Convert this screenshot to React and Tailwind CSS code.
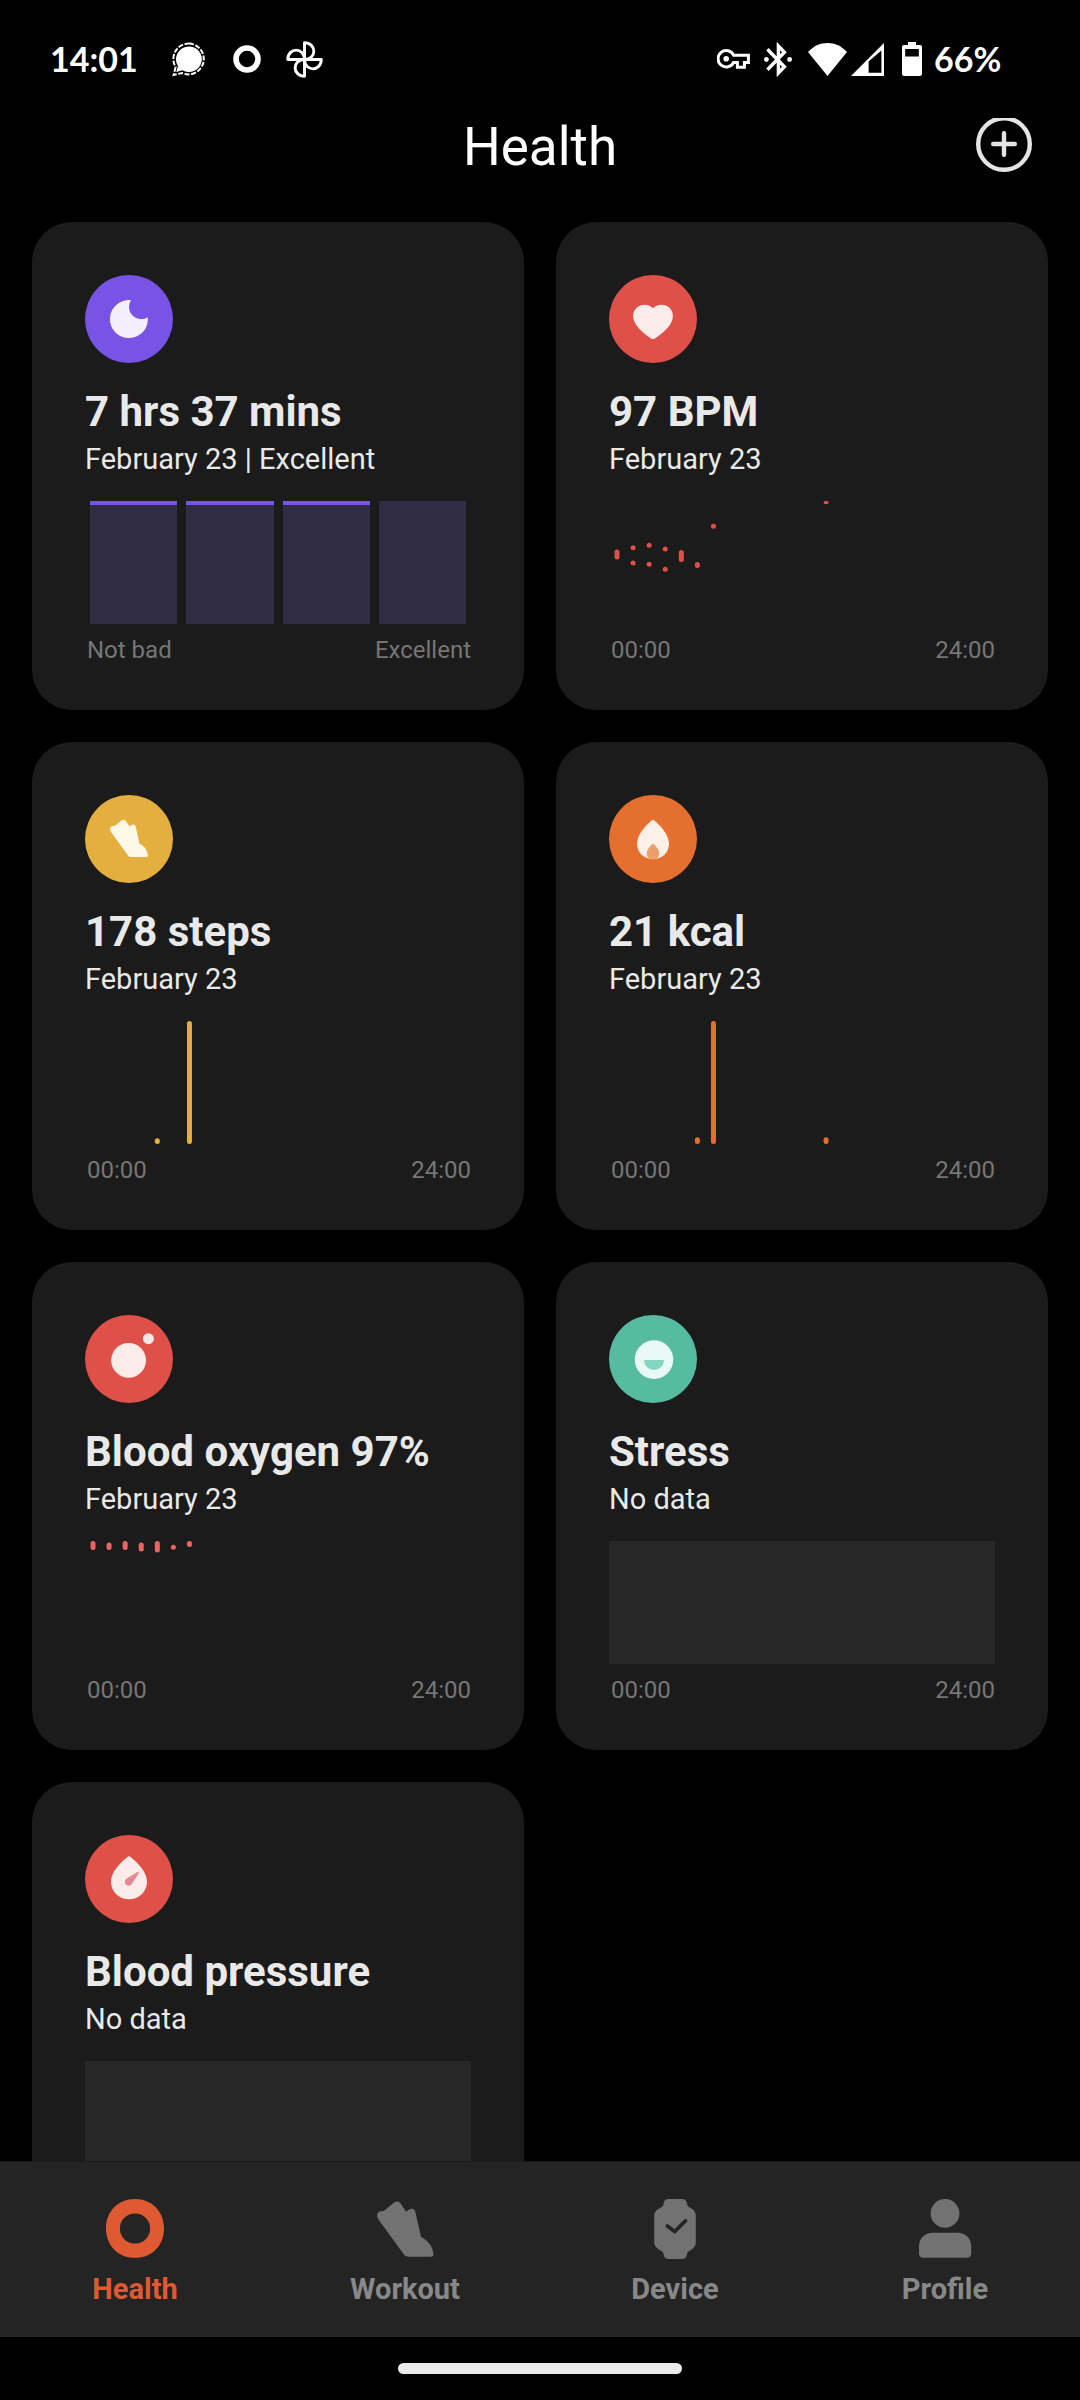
import { useState } from "react";

const SHOE =
  "M23 1.4L29.3 10.7L32.5 8.2C35 6.6 37.6 7.8 38.3 10.7L44 36.5L48.5 39.7C53.2 43.3 55.8 48.5 56.5 54.2C56.6 56.2 55.8 57.2 54 57.2H31.7C29.5 57.2 27.8 56.2 26.6 54.4L1.8 19.3C0.3 17 -0.3 14.5 0.4 12.6C1.2 10.6 3.4 9.9 5.2 9.9C6.6 9.9 7.4 9.4 8.4 8.6L16.8 1.4C18.8 -0.3 21.5 -0.5 23 1.4Z";

/* ── Card icons, drawn on the 88px disc ───────────────────────────── */
function Disc({ color, children }) {
  return (
    <svg viewBox="0 0 88 88" className="size-22" aria-hidden="true">
      <circle cx="44" cy="44" r="44" fill={color} />
      {children}
    </svg>
  );
}

const MoonIcon = () => (
  <Disc color="#7854e6">
    <path fill="#f4effd" d="M46 25.2A19 19 0 1 0 62.8 42.2A12.2 12.2 0 0 1 46 25.2Z" />
  </Disc>
);

const HeartIcon = () => (
  <Disc color="#df5049">
    <path
      fill="#fcedeb"
      d="M44 33.2C47 29.8 51.5 28.9 56 30.2C62.5 32.2 65.5 39 63 45.8C60.5 52.5 52.5 59.2 46 63.4Q44 64.6 42 63.4C35.5 59.2 27.5 52.5 25 45.8C22.5 39 25.5 32.2 32 30.2C36.5 28.9 41 29.8 44 33.2Z"
    />
  </Disc>
);

const StepsIcon = () => (
  <Disc color="#e5af3f">
    <path fill="#fef8e8" transform="translate(25 24.6) scale(0.67 0.655)" d={SHOE} />
  </Disc>
);

const FlameIcon = () => (
  <Disc color="#e46f2f">
    <path fill="#fdf0e7" d="M42.6 25.4Q44 24.2 45.4 25.4C52 31.2 60 39.8 60 48.6C60 57.6 53.2 64.2 44 64.2C34.8 64.2 28 57.6 28 48.6C28 39.8 36 31.2 42.6 25.4Z" />
    <path fill="#eba06b" d="M44 48.6C47 51.2 50.2 54.6 50.2 58.4C50.2 60.6 49 62.8 47.4 63.8Q44 64.6 40.6 63.8C39 62.8 37.8 60.6 37.8 58.4C37.8 54.6 41 51.2 44 48.6Z" />
  </Disc>
);

const OxygenIcon = () => (
  <Disc color="#df5049">
    <circle cx="43.6" cy="45.3" r="17.4" fill="#fbecea" />
    <circle cx="63.4" cy="23.7" r="5.5" fill="#f9e4e6" />
  </Disc>
);

const StressIcon = () => (
  <Disc color="#56bba0">
    <circle cx="45" cy="44.6" r="19.3" fill="#e9f9f5" />
    <path fill="#83d4c1" d="M35 45H55A10 10 0 0 1 35 45Z" />
  </Disc>
);

const PressureIcon = () => (
  <Disc color="#df5049">
    <path fill="#fbecea" d="M42.4 22Q44 20.6 45.6 22C53 28 62 37 62 46.4C62 56.6 54.2 64.2 44 64.2C33.8 64.2 26 56.6 26 46.4C26 37 35 28 42.4 22Z" />
    <path fill="#e38b92" d="M52.4 37.1C53.5 36.5 54.3 37.2 53.8 38.3L47.3 48.2A3.9 3.9 0 1 1 41.7 43.4Z" />
  </Disc>
);

/* ── Charts ───────────────────────────────────────────────────────── */
// marks are [hour, top, height] on a 24 hour axis
function DayChart({ color, marks, label }) {
  return (
    <svg viewBox="0 0 386 123" className="block w-full" role="img" aria-label={label}>
      {marks.map(([hour, top, height]) => (
        <rect
          key={`${hour}-${top}`}
          x={5.5 + hour * 16.08} y={top} width="5" height={height}
          rx={Math.min(2.5, height / 2)} fill={color}
        />
      ))}
    </svg>
  );
}

function SleepChart() {
  return (
    <div className="flex h-[123px] gap-[9px] px-[5px]">
      {[true, true, true, false].map((scored, i) => (
        <div key={i} className={`flex-1 border-t-4 bg-[#302c44] ${scored ? "border-[#7854e6]" : "border-[#302c44]"}`} />
      ))}
    </div>
  );
}

const NoData = () => <div className="h-[123px] rounded-xs bg-[#272727]" />;

const HEART_MARKS = [
  [0, 48.5, 10], [1, 44.2, 5], [1, 59.5, 5], [2, 41.8, 5], [2, 60.8, 5], [3, 45.5, 5],
  [3, 65.8, 5], [4, 49, 12], [5, 61, 6], [6, 22.8, 5], [13, 0, 3],
];
const OXYGEN_MARKS = [
  [0, 0, 9], [1, 1.5, 7.5], [2, 0, 9], [3, 1.5, 9], [4, 0, 11.5], [5, 3.7, 5], [6, 0, 6],
];

const CARDS = [
  { title: "7 hrs 37 mins", sub: "February 23 | Excellent", Icon: MoonIcon, from: "Not bad", to: "Excellent", chart: <SleepChart /> },
  { title: "97 BPM", sub: "February 23", Icon: HeartIcon, chart: <DayChart label="Heart rate" color="#df5049" marks={HEART_MARKS} /> },
  { title: "178 steps", sub: "February 23", Icon: StepsIcon, chart: <DayChart label="Steps" color="#e5af3f" marks={[[4, 117.3, 5.7], [6, 0, 123]]} /> },
  { title: "21 kcal", sub: "February 23", Icon: FlameIcon, chart: <DayChart label="Calories" color="#e46f2f" marks={[[5, 116.3, 6.7], [6, 0, 123], [13, 116.3, 6.7]]} /> },
  { title: "Blood oxygen 97%", sub: "February 23", Icon: OxygenIcon, chart: <DayChart label="Blood oxygen" color="#ee655f" marks={OXYGEN_MARKS} /> },
  { title: "Stress", sub: "No data", Icon: StressIcon, chart: <NoData /> },
  { title: "Blood pressure", sub: "No data", Icon: PressureIcon, chart: <NoData /> },
];

function Card({ title, sub, Icon, chart, from = "00:00", to = "24:00" }) {
  return (
    <section className="rounded-[40px] bg-[#1b1b1b] px-[53px] pt-[53px] pb-11">
      <Icon />
      <h2 className="mt-6 text-[42px] leading-[50px] font-bold whitespace-nowrap">{title}</h2>
      <p className="mt-1 text-[29px] leading-[36px]">{sub}</p>
      <div className="mt-6">{chart}</div>
      <div className="mt-2.5 flex justify-between pl-0.5 text-[24px] leading-[32px] text-[#767676]">
        <span>{from}</span>
        <span>{to}</span>
      </div>
    </section>
  );
}

/* ── Status bar ───────────────────────────────────────────────────── */
function StatusBar() {
  return (
    <div className="flex h-[118px] shrink-0 items-center justify-between pr-[76px] pl-[50px] font-['Lato',sans-serif] text-[34px] leading-[40px] font-bold text-white">
      <div className="flex items-center">
        <span className="w-[122px]">14:01</span>
        <svg viewBox="0 0 34 35" className="h-[35px] w-[34px]" fill="none" aria-hidden="true">
          <path fill="#fff" d="M17 4.4A12.8 12.8 0 1 1 10.5 28.2L4.2 30L6 24A12.8 12.8 0 0 1 17 4.4Z" />
          <path
            stroke="#fff" strokeWidth="2" strokeDasharray="5 1.6"
            d="M17 1.6A15.4 15.4 0 1 1 10 31L1.6 33L3.6 25A15.4 15.4 0 0 1 17 1.6Z"
          />
        </svg>
        <svg viewBox="0 0 28 28" className="ml-[27px] size-7" fill="none" aria-hidden="true">
          <circle cx="14" cy="14" r="11" stroke="#fff" strokeWidth="5.6" />
        </svg>
        <svg viewBox="0 0 38 38" className="ml-[25px] size-[37px]" fill="none" stroke="#fff" strokeWidth="3" strokeLinejoin="round" aria-hidden="true">
          <path d="M19 19V1.8C25 1.8 28.6 6 28.6 10.6C28.6 15 25 19 19 19Z" />
          <path d="M19 19H36.2C36.2 25 32 28.6 27.4 28.6C23 28.6 19 25 19 19Z" />
          <path d="M19 19V36.2C13 36.2 9.4 32 9.4 27.4C9.4 23 13 19 19 19Z" />
          <path d="M19 19H1.8C1.8 13 6 9.4 10.6 9.4C15 9.4 19 13 19 19Z" />
        </svg>
      </div>

      <div className="flex items-center">
        <svg viewBox="0 0 33 20" className="h-5 w-[33px]" fill="none" stroke="#fff" strokeWidth="3" aria-hidden="true">
          <path d="M16.6 6.2A8.2 8.2 0 1 0 16.6 13.4H20.4V18.2H27.4V13.4H31.4V6.2Z" />
          <circle cx="9.2" cy="9.8" r="2.8" fill="#fff" stroke="none" />
        </svg>
        <svg viewBox="0 0 28 35" className="ml-[14px] h-[35px] w-7" fill="none" stroke="#fff" strokeWidth="3.4" aria-hidden="true">
          <path d="M3.4 7.2L20.4 24.8L14.4 31V4L20.4 10.2L3.4 27.8" />
          <circle cx="2.4" cy="17.5" r="2.4" fill="#fff" stroke="none" />
          <circle cx="25.6" cy="17.5" r="2.4" fill="#fff" stroke="none" />
        </svg>
        <svg viewBox="0 0 39 33" className="ml-4 h-[33px] w-[39px]" aria-hidden="true">
          <path fill="#fff" d="M19.5 33L0 9C5.4 3.2 12 0 19.5 0S33.6 3.2 39 9Z" />
        </svg>
        <svg viewBox="0 0 33 33" className="ml-1 size-[33px]" aria-hidden="true">
          <path fill="#fff" fillRule="evenodd" d="M33 0V33H0ZM30.4 7.4L17.6 18.4V29.8H30.4Z" />
        </svg>
        <svg viewBox="0 0 20 34" className="ml-[18px] h-[34px] w-5" aria-hidden="true">
          <path fill="#fff" fillRule="evenodd" d="M6 0H14V3H18Q20 3 20 5V32Q20 34 18 34H2Q0 34 0 32V5Q0 3 2 3H6ZM3.2 7V14.6H16.8V7Z" />
        </svg>
        <span className="ml-3 w-[70px]">66%</span>
      </div>
    </div>
  );
}

/* ── Bottom tabs ──────────────────────────────────────────────────── */
const TABS = [
  {
    name: "Health",
    icon: (
      <path
        fillRule="evenodd"
        d="M30 0C47 0 59 12.4 59 29.4C59 46.4 47 58.8 30 58.8C13 58.8 1 46.4 1 29.4C1 12.4 13 0 30 0ZM30 14.4A15.1 15.1 0 1 0 30 44.6A15.1 15.1 0 1 0 30 14.4Z"
      />
    ),
  },
  { name: "Workout", icon: <path transform="translate(2 2.4) scale(1 0.968)" d={SHOE} /> },
  {
    name: "Device",
    icon: (
      <>
        <path d="M23.5 0H37C40 0 41.2 1.6 41.8 4C42.2 6.2 42.8 7.4 44.6 8.4C48.6 10 50.8 13 50.8 17V43C50.8 47 48.6 49.6 44.6 51.8C42.8 52.6 42.2 53.8 41.8 56C41.2 58.4 40 60 37 60H23.5C20.5 60 19.4 58.4 18.8 56C18.4 53.8 17.8 52.6 16 51.8C12 49.6 9.2 47 9.2 43V17C9.2 13 12 10 16 8.4C17.8 7.4 18.4 6.2 18.8 4C19.4 1.6 20.5 0 23.5 0Z" />
        <path d="M22.4 27L29.6 32.6L40.6 21.8" fill="none" stroke="#242424" strokeWidth="3.6" strokeLinecap="round" strokeLinejoin="round" />
      </>
    ),
  },
  {
    name: "Profile",
    icon: (
      <>
        <circle cx="30" cy="14.4" r="14.4" />
        <path d="M17 33.8H43.4C51 34.2 56.2 40 56.2 47V54.4C56.2 57.2 54.4 58.8 51.6 58.8H8.6C5.8 58.8 4 57.2 4 54.4V47C4 40 9.4 34.2 17 33.8Z" />
      </>
    ),
  },
];

function TabBar() {
  const [active, setActive] = useState("Health");
  return (
    <nav className="grid shrink-0 grid-cols-4 border-t border-[#1c1c1c] bg-[#242424]">
      {TABS.map(({ name, icon }) => {
        const on = name === active;
        return (
          <button
            key={name}
            type="button"
            aria-current={on ? "page" : undefined}
            onClick={() => setActive(name)}
            className="flex flex-col items-center pt-[37px] pb-8"
          >
            <svg viewBox="0 0 60 60" className={`size-[60px] ${on ? "fill-[#df5a31]" : "fill-[#727272]"}`} aria-hidden="true">
              {icon}
            </svg>
            <span className={`mt-3.5 text-[29px] leading-[32px] font-bold ${on ? "text-[#df5a31]" : "text-[#888888]"}`}>
              {name}
            </span>
          </button>
        );
      })}
    </nav>
  );
}

export default function App() {
  return (
    <div className="flex h-screen flex-col overflow-hidden bg-black font-['Roboto',sans-serif] text-[#e9e9e9]">
      <StatusBar />

      <header className="mb-[46px] grid h-[58px] shrink-0 grid-cols-[1fr_auto_1fr] items-center px-12">
        <h1 className="col-start-2 text-[53px] leading-[58px] text-white">Health</h1>
        <button type="button" aria-label="Add" className="size-14 self-start justify-self-end">
          <svg viewBox="0 0 56 56" className="size-14" fill="none" stroke="#e4e4e4" strokeWidth="4.4" strokeLinecap="round">
            <circle cx="28" cy="26" r="25.8" />
            <path d="M28 15.2V36.8M17.2 26H38.8" />
          </svg>
        </button>
      </header>

      <main className="min-h-0 flex-1 overflow-y-auto px-8 [scrollbar-width:none]">
        <div className="grid grid-cols-2 gap-8">
          {CARDS.map((card) => <Card key={card.title} {...card} />)}
        </div>
      </main>

      <TabBar />

      <div className="flex shrink-0 justify-center py-[26px]">
        <div className="h-[11px] w-[284px] rounded-full bg-[#ebebeb]" />
      </div>
    </div>
  );
}
